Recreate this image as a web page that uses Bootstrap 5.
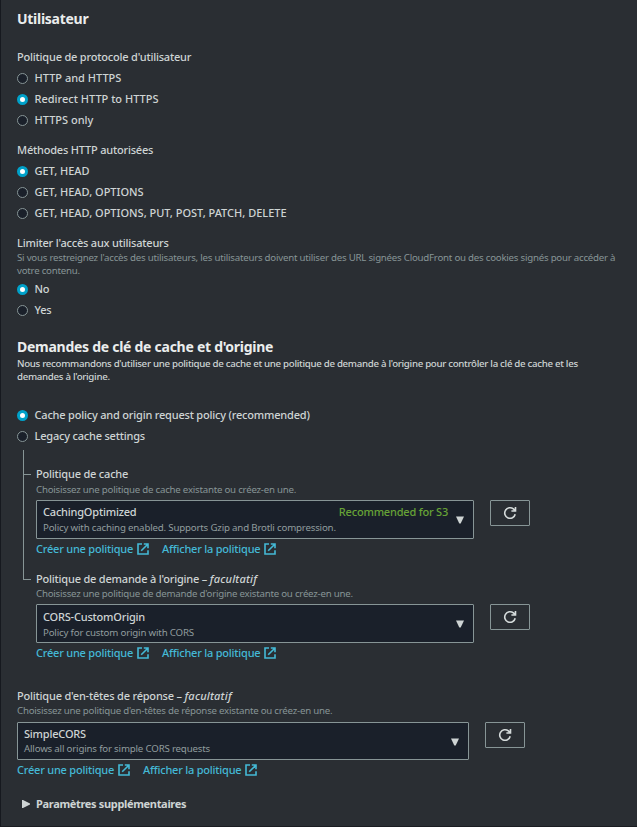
<!DOCTYPE html>
<html lang="fr">
<head>
<meta charset="utf-8">
<meta name="viewport" content="width=device-width, initial-scale=1">
<title>Utilisateur</title>
<link href="https://cdn.jsdelivr.net/npm/bootstrap@5.3.0/dist/css/bootstrap.min.css" rel="stylesheet">
<style>
body{background:#2a2e33;color:#ced4d4;font-family:"Noto Sans","Open Sans",sans-serif;font-size:11px;font-weight:500;line-height:16px;letter-spacing:-.2px}
.panel{height:827px;padding:9px 20px 0 16px;border-left:1px solid #16191f;border-bottom:1px solid #1b1d22}
.title{font-size:14px;font-weight:700;line-height:20px;letter-spacing:-.27px;color:#eaeded;margin:0}
.group{margin-top:12px}
.group-first{margin-top:20px}
.options{margin-top:2px}
.hint + .options{margin-top:1px}
.hint{font-size:9.7px;font-weight:400;line-height:13px;letter-spacing:-.23px;color:#879596}
.intro{font-size:9.7px;line-height:13px;letter-spacing:-.3px}
.caps{letter-spacing:0}
.choice{height:21px;min-height:0;margin:0;padding:0;gap:6.5px}
.choice .form-check-input{float:none;flex:none;width:11px;height:11px;margin:1px 0 0;background-color:#1a202a;border:1px solid #879596;box-shadow:none}
.choice .form-check-input:checked{background-color:#fff;border:3.5px solid #00a1c9;background-image:none}
.cache{margin-top:17px}
.mode{margin:21px 0 4px}
.tree{margin-left:6px;position:relative;padding:16px 0 0 13px}
.tree::before{content:"";position:absolute;left:0;top:0;width:1px;height:130px;background:#879596}
.branch{position:relative}
.branch::before{content:"";position:absolute;left:-13px;top:8px;width:8px;height:1px;background:#879596}
.branch-hint{margin-top:1px}
.branch + .branch{margin-top:14px}
.box-row{margin-top:4px}
.picker{width:438px;background:#1a202a;border:1px solid #879596;border-radius:1px;height:39px;padding:3px 9px 0 6px}
.branch + .branch .picker{padding-top:4px}
.picker .hint{line-height:15px;color:#919d9e;letter-spacing:-.18px}
.caret{margin-top:12px}
.branch + .branch .caret{margin-top:11px}
.good{color:#67a336;margin-right:8px}
.reload{width:40px;height:26px;padding:0;border:1px solid #879596;border-radius:1px;color:#d5dbdb}
.links{height:16px;gap:13px;margin-top:2px}
.links a{color:#44b9d6;gap:4px;letter-spacing:-.22px}
em{letter-spacing:.2px}
.headers{margin-top:27px}
.headers .box-row{margin-top:5px}
.headers .picker{width:452px;height:38px}
.headers .picker .hint{line-height:14px}
.more{font-weight:700;letter-spacing:-.33px;margin-top:18px;padding-left:5px;gap:6px}
svg{display:block;flex:none}
</style>
</head>
<body>
<svg width="0" height="0" class="position-absolute">
<symbol id="ext" viewBox="0 0 12 12"><path d="M5 1H1v10h10V7.2M6.8 1H11v4.2M10.8 1.2 4.2 7.8" fill="none" stroke="currentColor" stroke-width="1.6"/></symbol>
<symbol id="reload" viewBox="0 0 14 14"><path d="M12.2 8.2A5.3 5.3 0 1 1 10.4 2.9L12 4.4M8.4 5h4.1V1" fill="none" stroke="currentColor" stroke-width="1.6"/></symbol>
<symbol id="down" viewBox="0 0 8 8"><path d="M0 .5h8L4.7 7.5H3.3z" fill="currentColor"/></symbol>
</svg>
<main class="panel">
<h2 class="title">Utilisateur</h2>
<section class="group-first">
<div>Politique de protocole d'utilisateur</div>
<div class="options">
<label class="form-check choice caps d-flex align-items-center"><input class="form-check-input" type="radio" name="p">HTTP and HTTPS</label>
<label class="form-check choice caps d-flex align-items-center"><input class="form-check-input" type="radio" name="p" checked>Redirect HTTP to HTTPS</label>
<label class="form-check choice caps d-flex align-items-center"><input class="form-check-input" type="radio" name="p">HTTPS only</label>
</div>
</section>
<section class="group">
<div>Méthodes HTTP autorisées</div>
<div class="options">
<label class="form-check choice caps d-flex align-items-center"><input class="form-check-input" type="radio" name="m" checked>GET, HEAD</label>
<label class="form-check choice caps d-flex align-items-center"><input class="form-check-input" type="radio" name="m">GET, HEAD, OPTIONS</label>
<label class="form-check choice caps d-flex align-items-center"><input class="form-check-input" type="radio" name="m">GET, HEAD, OPTIONS, PUT, POST, PATCH, DELETE</label>
</div>
</section>
<section class="group">
<div>Limiter l'accès aux utilisateurs</div>
<div class="hint">Si vous restreignez l'accès des utilisateurs, les utilisateurs doivent utiliser des URL signées CloudFront ou des cookies signés pour accéder à<br>votre contenu.</div>
<div class="options">
<label class="form-check choice d-flex align-items-center"><input class="form-check-input" type="radio" name="l" checked>No</label>
<label class="form-check choice d-flex align-items-center"><input class="form-check-input" type="radio" name="l">Yes</label>
</div>
</section>
<section class="cache">
<h2 class="title">Demandes de clé de cache et d'origine</h2>
<div class="intro">Nous recommandons d'utiliser une politique de cache et une politique de demande à l'origine pour contrôler la clé de cache et les<br>demandes à l'origine.</div>
<div class="mode">
<label class="form-check choice d-flex align-items-center"><input class="form-check-input" type="radio" name="c" checked>Cache policy and origin request policy (recommended)</label>
<label class="form-check choice d-flex align-items-center"><input class="form-check-input" type="radio" name="c">Legacy cache settings</label>
</div>
<div class="tree">
<div class="branch">
<div>Politique de cache</div>
<div class="hint branch-hint">Choisissez une politique de cache existante ou créez-en une.</div>
<div class="d-flex align-items-start gap-3 box-row">
<div class="picker d-flex justify-content-between"><div><div>CachingOptimized</div><div class="hint">Policy with caching enabled. Supports Gzip and Brotli compression.</div></div>
<div class="d-flex"><span class="good">Recommended for S3</span><svg class="caret" width="8" height="8"><use href="#down"/></svg></div></div>
<button class="btn reload d-flex align-items-center justify-content-center" type="button" aria-label="Actualiser"><svg width="14" height="14"><use href="#reload"/></svg></button>
</div>
<div class="links d-flex"><a class="d-flex align-items-center text-decoration-none" href="#">Créer une politique <svg width="12" height="12"><use href="#ext"/></svg></a><a class="d-flex align-items-center text-decoration-none" href="#">Afficher la politique <svg width="12" height="12"><use href="#ext"/></svg></a></div>
</div>
<div class="branch">
<div>Politique de demande à l'origine – <em>facultatif</em></div>
<div class="hint">Choisissez une politique de demande d'origine existante ou créez-en une.</div>
<div class="d-flex align-items-start gap-3 box-row">
<div class="picker d-flex justify-content-between"><div><div>CORS-CustomOrigin</div><div class="hint">Policy for custom origin with CORS</div></div>
<svg class="caret" width="8" height="8"><use href="#down"/></svg></div>
<button class="btn reload d-flex align-items-center justify-content-center" type="button" aria-label="Actualiser"><svg width="14" height="14"><use href="#reload"/></svg></button>
</div>
<div class="links d-flex"><a class="d-flex align-items-center text-decoration-none" href="#">Créer une politique <svg width="12" height="12"><use href="#ext"/></svg></a><a class="d-flex align-items-center text-decoration-none" href="#">Afficher la politique <svg width="12" height="12"><use href="#ext"/></svg></a></div>
</div>
</div>
</section>
<section class="headers">
<div>Politique d'en-têtes de réponse – <em>facultatif</em></div>
<div class="hint">Choisissez une politique d'en-têtes de réponse existante ou créez-en une.</div>
<div class="d-flex align-items-start gap-3 box-row">
<div class="picker d-flex justify-content-between"><div><div>SimpleCORS</div><div class="hint">Allows all origins for simple CORS requests</div></div>
<svg class="caret" width="8" height="8"><use href="#down"/></svg></div>
<button class="btn reload d-flex align-items-center justify-content-center" type="button" aria-label="Actualiser"><svg width="14" height="14"><use href="#reload"/></svg></button>
</div>
<div class="links d-flex"><a class="d-flex align-items-center text-decoration-none" href="#">Créer une politique <svg width="12" height="12"><use href="#ext"/></svg></a><a class="d-flex align-items-center text-decoration-none" href="#">Afficher la politique <svg width="12" height="12"><use href="#ext"/></svg></a></div>
</section>
<div class="more d-flex align-items-center"><svg width="8" height="8" viewBox="0 0 8 8"><path d="M0 0h1l7 3.6v.8L1 8H0z" fill="currentColor"/></svg>Paramètres supplémentaires</div>
</main>
<script src="https://cdn.jsdelivr.net/npm/bootstrap@5.3.0/dist/js/bootstrap.bundle.min.js"></script>
</body>
</html>
